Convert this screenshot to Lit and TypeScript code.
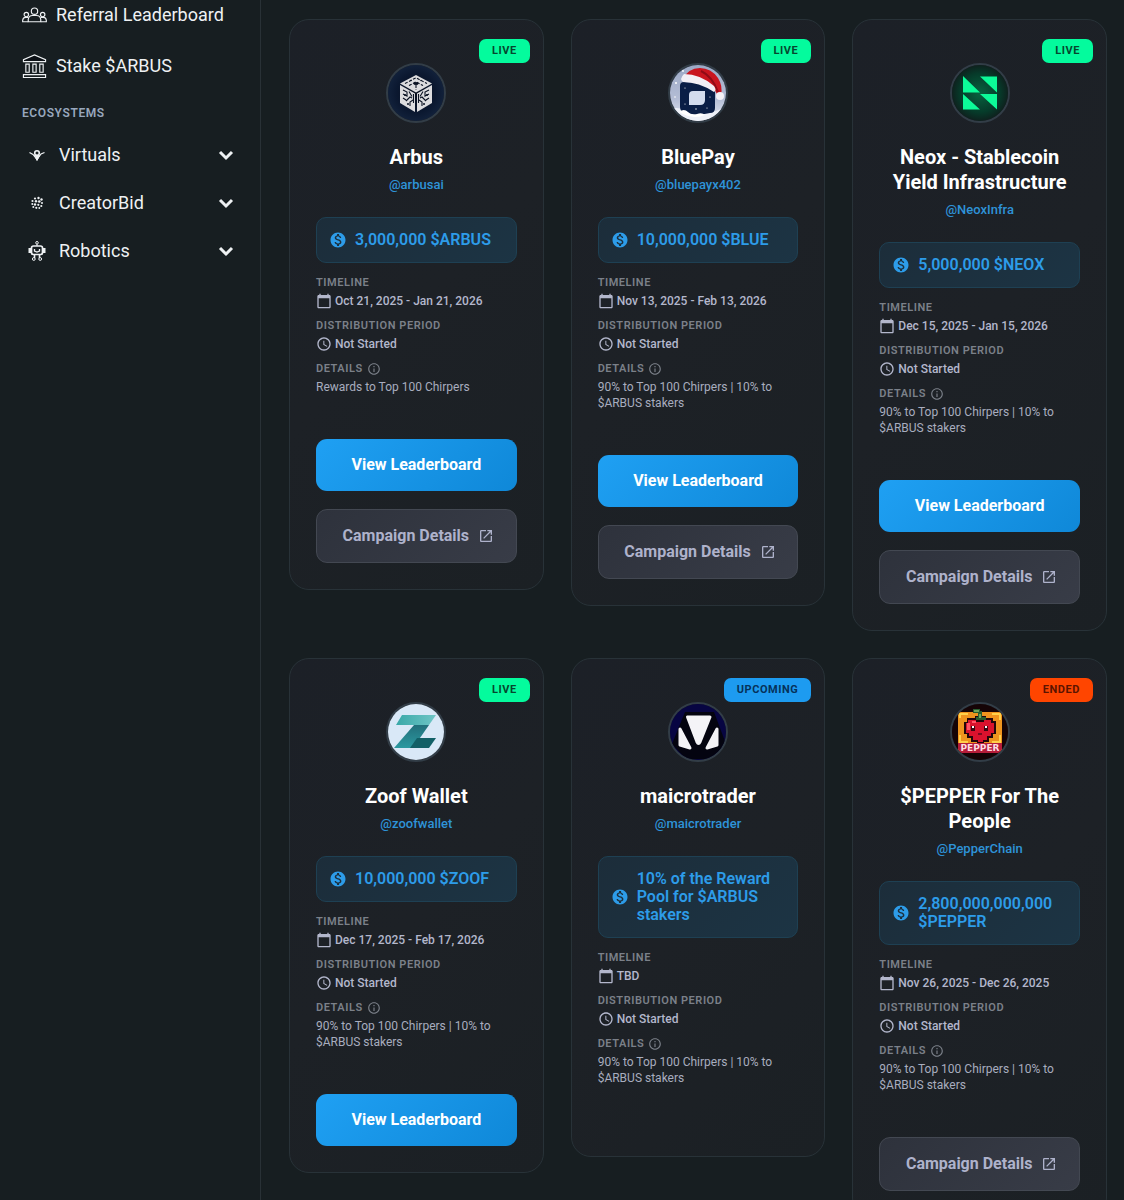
import { LitElement, html, css, svg, nothing } from "lit";
import { customElement, property } from "lit/decorators.js";

type Status = "live" | "upcoming" | "ended";

interface Campaign {
  name: string;
  handle: string;
  logo: string;
  status: Status;
  reward: string;
  timeline: string;
  details: string;
  leaderboard: boolean;
  campaign: boolean;
}

const SPLIT = "90% to Top 100 Chirpers | 10% to $ARBUS stakers";

const CAMPAIGNS: Campaign[] = [
  { name: "Arbus", handle: "arbusai", logo: "arbus", status: "live", reward: "3,000,000 $ARBUS", timeline: "Oct 21, 2025 - Jan 21, 2026", details: "Rewards to Top 100 Chirpers", leaderboard: true, campaign: true },
  { name: "BluePay", handle: "bluepayx402", logo: "bluepay", status: "live", reward: "10,000,000 $BLUE", timeline: "Nov 13, 2025 - Feb 13, 2026", details: SPLIT, leaderboard: true, campaign: true },
  { name: "Neox - Stablecoin Yield Infrastructure", handle: "NeoxInfra", logo: "neox", status: "live", reward: "5,000,000 $NEOX", timeline: "Dec 15, 2025 - Jan 15, 2026", details: SPLIT, leaderboard: true, campaign: true },
  { name: "Zoof Wallet", handle: "zoofwallet", logo: "zoof", status: "live", reward: "10,000,000 $ZOOF", timeline: "Dec 17, 2025 - Feb 17, 2026", details: SPLIT, leaderboard: true, campaign: false },
  { name: "maicrotrader", handle: "maicrotrader", logo: "maicro", status: "upcoming", reward: "10% of the Reward Pool for $ARBUS stakers", timeline: "TBD", details: SPLIT, leaderboard: false, campaign: false },
  { name: "$PEPPER For The People", handle: "PepperChain", logo: "pepper", status: "ended", reward: "2,800,000,000,000 $PEPPER", timeline: "Nov 26, 2025 - Dec 26, 2025", details: SPLIT, leaderboard: false, campaign: true },
];

const logos: Record<string, unknown> = {
  arbus: svg`
    <defs><radialGradient id="a"><stop offset="0" stop-color="#070d1b"/><stop offset=".65" stop-color="#0b1830"/><stop offset="1" stop-color="#13233d"/></radialGradient></defs>
    <rect width="60" height="60" fill="url(#a)"/>
    <g fill="#dcdcde">
      <path d="M30 12 46 20.500 30 29.500 14 20.500Z"/>
      <path d="M14 22 29 30.500V49L14 40Z"/>
      <path d="M46 22 31 30.500V49L46 40Z"/>
    </g>
    <g fill="none" stroke="#0a1222" stroke-width="1.100">
      <path d="M19 20.500 30 14.800 41 20.500M23 22.600l7-3.800 7 3.800M30 22v5" stroke-dasharray="3 1.500"/>
      <path d="M17 27l4 2v4l-4-2M20 38l4-4 2 1M23 28.500l3 5M17 35l3 2M24 43v-4l3-2"/>
      <path d="M43 27l-4 2v4l4-2M40 38l-4-4-2 1M37 28.500l-3 5M43 35l-3 2M36 43v-4l-3-2"/>
      <path d="M27.500 31v9M32.500 31v9"/>
    </g>
    <ellipse cx="30" cy="20.500" rx="2.600" ry="1.600" fill="#0a1222"/>
    <g fill="#0a1222"><circle cx="25" cy="17.500" r=".8"/><circle cx="35" cy="17.500" r=".8"/><circle cx="19" cy="32" r="1"/><circle cx="41" cy="32" r="1"/><circle cx="22" cy="41" r="1"/><circle cx="38" cy="41" r="1"/></g>`,
  bluepay: svg`
    <defs><linearGradient id="b" x2="0" y2="1"><stop offset="0" stop-color="#9aa8c5"/><stop offset=".6" stop-color="#b4bdd5"/><stop offset="1" stop-color="#e9edf6"/></linearGradient></defs>
    <rect width="60" height="60" fill="url(#b)"/>
    <path d="M0 47Q8 43 17 47T34 51T60 43V60H0Z" fill="#edf0f8"/>
    <path d="M16 19 38 20 47 27V45Q47 50 42 50L31 52 17 50Q12 49 12 44V23Q12 19 16 19Z" fill="#0a1e46"/>
    <path d="M25 28H37V37Q37 42 32 42H21V32Q21 28 25 28Z" fill="#d3dcee"/>
    <path d="M14 17Q20 5 32 5Q43 5 50 15Q55 23 53 32L49 31Q44 20 34 17Z" fill="#c9151f"/>
    <path d="M33 8Q44 13 50 29" fill="none" stroke="#900b16" stroke-width="2"/>
    <path d="M16 11Q32 11 46 23Q49 27 46 29Q31 19 15 19Q11 16 16 11Z" fill="#f2eff5"/>
    <circle cx="52" cy="33" r="4" fill="#f5f2f7"/>
    <g fill="#fff"><circle cx="8" cy="20" r="1"/><circle cx="15" cy="8" r=".9"/><circle cx="7" cy="34" r=".8"/><circle cx="17" cy="25" r=".6"/><circle cx="42" cy="34" r=".6"/><circle cx="28" cy="46" r=".7"/><circle cx="39" cy="45" r=".6"/><circle cx="17" cy="41" r=".6"/></g>
    <path d="M11 49q5-4 9 0t9 2 8 1q-12 5-26-3Z" fill="#fff"/>`,
  neox: svg`
    <defs><radialGradient id="n"><stop offset="0" stop-color="#08623f"/><stop offset=".65" stop-color="#063b2a"/><stop offset="1" stop-color="#101b1b"/></radialGradient></defs>
    <rect width="60" height="60" fill="url(#n)"/>
    <g fill="#0cfb98"><path d="M13 13 30 29.500H13ZM13 31 30 46.500H13ZM30 13.500H47V29.500ZM30 31H47V46.500Z"/></g>`,
  zoof: svg`
    <defs><linearGradient id="z"><stop offset="0" stop-color="#39a8a8"/><stop offset="1" stop-color="#6fc5c6"/></linearGradient><linearGradient id="z2" x2="0" y2="1"><stop offset="0" stop-color="#226f7b"/><stop offset="1" stop-color="#2b99a0"/></linearGradient></defs>
    <rect width="60" height="60" fill="#d9e8f7"/>
    <path d="M16 13H50L43 23H10Z" fill="url(#z)"/>
    <path d="M28 23H43L27 46H8Z" fill="url(#z2)"/>
    <path d="M31 36H50L43 46H24Z" fill="#126067"/>`,
  maicro: svg`
    <rect width="60" height="60" fill="#070542"/>
    <path d="M17 10H46L58 42 43 57H18L4 42Z" fill="#040410"/>
    <g fill="#f4f3f7" stroke="#f4f3f7" stroke-linejoin="round" stroke-width="3"><path d="M19.500 15H42L32 40Q30.500 43 29 40ZM12 27 22 46 12 43ZM49 27 39 46 49 43Z"/></g>`,
  pepper: svg`
    <rect width="60" height="60" fill="#150406"/>
    <rect x="8" y="10" width="44" height="40" fill="#ef941e"/><path d="M10 16V12H18M42 12H50V18M10 33V40H18M50 33V40H42" fill="none" stroke="#ffd04a" stroke-width="2"/>
    <path d="M17 16H25V14H36V16H43V19H46V32H43V36H39V40H34V42H27V40H21V36H17V32H14V20H17Z" fill="#23060b"/>
    <path d="M18 18H26V20H34V18H41V21H44V31H41V34H37V38H33V40H28V38H23V34H19V31H16V21H18Z" fill="#d9122d"/>
    <path d="M17 21H20V28H17ZM22 19H26V21H22Z" fill="#ff5366"/>
    <path d="M23 7H30V9H32V15H36V18H26V15H28V11H23Z" fill="#285d2e"/><path d="M24 8H29V10H24ZM29 12H31V16H29Z" fill="#72a35a"/>
    <path d="M21 24H25V29H21ZM34 24H38V29H34Z" fill="#3b0612"/><path d="M22 24H24V26H22ZM35 24H37V26H35Z" fill="#fff"/>
    <path d="M28 31H32V33H28Z" fill="#790a20"/>
    <rect x="8" y="41" width="44" height="10" fill="#b51d3a"/>
    <text x="30" y="49" text-anchor="middle" font-family="DejaVu Sans, sans-serif" font-size="9" font-weight="700" fill="#ffdbe2">PEPPER</text>`,
};

const coinIcon = svg`<svg class="coin" viewBox="0 0 24 24" aria-hidden="true"><path fill="currentColor" d="M12 2C6.480 2 2 6.480 2 12s4.480 10 10 10 10-4.480 10-10S17.520 2 12 2zm1.410 16.090V20h-2.670v-1.930c-1.710-.36-3.160-1.460-3.270-3.400h1.960c.1 1.050.82 1.870 2.650 1.870 1.960 0 2.400-.98 2.400-1.590 0-.83-.44-1.610-2.670-2.140-2.480-.6-4.180-1.620-4.180-3.670 0-1.720 1.390-2.840 3.110-3.210V4h2.670v1.950c1.860.45 2.790 1.860 2.850 3.390H14.300c-.05-1.110-.64-1.870-2.220-1.870-1.500 0-2.400.68-2.400 1.640 0 .84.65 1.390 2.670 1.910s4.180 1.390 4.180 3.910c-.01 1.830-1.380 2.830-3.120 3.160z"/></svg>`;
const calendarIcon = svg`<svg class="meta" viewBox="0 0 24 24" aria-hidden="true"><path fill="currentColor" d="M20 3h-1V1h-2v2H7V1H5v2H4c-1.100 0-2 .9-2 2v16c0 1.100.9 2 2 2h16c1.100 0 2-.9 2-2V5c0-1.100-.9-2-2-2zm0 18H4V8h16v13z"/></svg>`;
const clockIcon = svg`<svg class="meta" viewBox="0 0 24 24" aria-hidden="true"><path fill="currentColor" d="M11.990 2C6.470 2 2 6.480 2 12s4.470 10 9.990 10C17.520 22 22 17.520 22 12S17.520 2 11.990 2zM12 20c-4.420 0-8-3.580-8-8s3.580-8 8-8 8 3.580 8 8-3.580 8-8 8zm.5-13H11v6l5.250 3.150.75-1.230-4.500-2.670z"/></svg>`;
const infoIcon = svg`<svg class="info" viewBox="0 0 24 24" aria-hidden="true"><path fill="currentColor" d="M11 7h2v2h-2zm0 4h2v6h-2zm1-9C6.480 2 2 6.480 2 12s4.480 10 10 10 10-4.480 10-10S17.520 2 12 2zm0 18c-4.410 0-8-3.590-8-8s3.590-8 8-8 8 3.590 8 8-3.590 8-8 8z"/></svg>`;
const openIcon = svg`<svg class="open" viewBox="0 0 24 24" aria-hidden="true"><path fill="currentColor" d="M19 19H5V5h7V3H5c-1.110 0-2 .9-2 2v14c0 1.100.89 2 2 2h14c1.100 0 2-.9 2-2v-7h-2v7zM14 3v2h3.590l-9.830 9.830 1.410 1.410L19 6.410V10h2V3h-7z"/></svg>`;

const referralIcon = svg`<svg class="icon" viewBox="0 0 26 26" fill="none" stroke="currentColor" stroke-width="1.200" aria-hidden="true"><circle cx="13" cy="9" r="3.300"/><path d="M6.500 20V17.500Q7 13.500 11 13.500H15Q19 13.500 19.500 17.500V20Z"/><circle cx="4.500" cy="12.500" r="2.300"/><circle cx="21.500" cy="12.500" r="2.300"/><path d="M6.500 20H.7V18.500Q1 15.500 4 15.500H6.500M19.500 20H25.300V18.500Q25 15.500 22 15.500H19.500"/></svg>`;
const bankIcon = svg`<svg class="icon" viewBox="0 0 26 26" fill="none" stroke="currentColor" stroke-width="1.200" aria-hidden="true"><path d="M1.500 8.500V6.500L13 1.500 24.500 6.500V8.500Z" fill="#0b1015"/><path d="M4 11H7.500V19.500H4ZM11.300 11H14.700V19.500H11.300ZM18.500 11H22V19.500H18.500Z"/><path d="M1.500 22H24.500V25H1.500Z"/></svg>`;
const virtualsIcon = svg`<svg class="eco" viewBox="0 0 20 20" fill="none" stroke="currentColor" aria-hidden="true"><path d="M2.500 7.500 6 9.500 10 14.500 14 9 17.500 7.500" stroke-width="1.200"/><circle cx="10" cy="8" r="2.300" stroke-width="1.600"/><path d="M7.500 10 10 15.500 12.500 10.500Z" fill="currentColor"/></svg>`;
const creatorIcon = svg`<svg class="eco" viewBox="0 0 20 20" fill="currentColor" aria-hidden="true"><circle cx="8" cy="5.500" r="1.100"/><circle cx="11.500" cy="5" r="1.200"/><circle cx="14.500" cy="6.500" r="1.200"/><circle cx="5.500" cy="8" r="1.100"/><circle cx="9" cy="8.300" r="1.200"/><circle cx="12.300" cy="8.500" r="1.300"/><circle cx="15" cy="10" r="1"/><circle cx="5.300" cy="11" r="1"/><circle cx="8" cy="11.500" r="1.200"/><circle cx="11.300" cy="11.800" r="1.100"/><circle cx="14.300" cy="13" r="1.100"/><circle cx="6.300" cy="14" r="1"/><circle cx="9.300" cy="14.800" r="1.100"/><circle cx="12.300" cy="15" r=".9"/></svg>`;
const robotIcon = svg`<svg class="eco" viewBox="0 0 20 20" fill="none" stroke="currentColor" aria-hidden="true"><circle cx="10" cy="1.800" r="1.300"/><path d="M10 3V5"/><rect x="4.500" y="5" width="11" height="8.500" rx="2" stroke-width="1.700"/><path d="M3 7V12M17 7V12" stroke-width="3"/><path d="M7.500 8V10L10 11 12.500 10V8" stroke-width="1.300"/><path d="M7.500 13.500V17M12.500 13.500V17" stroke-width="1.600"/><circle cx="6.800" cy="18" r="1.400"/><circle cx="13.200" cy="18" r="1.400"/></svg>`;
const chevronIcon = svg`<svg class="chevron" viewBox="0 0 16 16" fill="none" stroke="currentColor" stroke-width="3" aria-hidden="true"><path d="M2 5 8 11 14 5"/></svg>`;

@customElement("side-nav")
export class SideNav extends LitElement {
  static styles = css`
    :host { display: block; }
    .nav { display: flex; flex-direction: column; padding: 2px 22px; }
    .link { display: flex; align-items: center; gap: 9px; height: 26px; margin-bottom: 25px; color: #eef1f3; font-size: 18px; line-height: 26px; text-decoration: none; white-space: nowrap; }
    .icon { width: 25px; height: 26px; flex: none; }
    .heading { margin: 4px 0 22px; font-size: 12px; line-height: 16px; font-weight: 600; letter-spacing: 0.05em; color: #98a7bd; }
    .group { display: flex; align-items: center; height: 24px; margin: 0 0 24px; padding: 0 4px 0 5px; border: 0; background: none; color: #eef1f3; font: 400 18px/24px Roboto, sans-serif; text-align: left; }
    .label { flex: 1; margin-left: 12px; }
    .eco { width: 20px; height: 20px; flex: none; }
    .chevron { width: 16px; height: 16px; }
    .link:last-of-type { margin-bottom: 22px; }
  `;

  render() {
    const groups: [string, unknown][] = [["Virtuals", virtualsIcon], ["CreatorBid", creatorIcon], ["Robotics", robotIcon]];
    return html`<nav class="nav">
      <a class="link" href="#referral">${referralIcon}Referral Leaderboard</a>
      <a class="link" href="#stake">${bankIcon}Stake $ARBUS</a>
      <h2 class="heading">ECOSYSTEMS</h2>
      ${groups.map(([label, icon]) => html`<button class="group" type="button" aria-expanded="false">${icon}<span class="label">${label}</span>${chevronIcon}</button>`)}
    </nav>`;
  }
}

@customElement("campaign-card")
export class CampaignCard extends LitElement {
  @property({ attribute: false }) item!: Campaign;

  static styles = css`
    :host { display: block; }
    .card { position: relative; display: flex; flex-direction: column; padding: 43px 26px 26px; border: 1px solid #283238; border-radius: 20px; background: linear-gradient(135deg, #1c2027, #1d2126 50%, #1b2024); }
    .badge { position: absolute; top: 19px; right: 13px; padding: 0 13px; border-radius: 7px; font-size: 11px; line-height: 24px; font-weight: 700; letter-spacing: 0.05em; }
    .live { background: #04fb9d; color: #06472f; }
    .upcoming { background: #1d9bf0; color: #06325a; }
    .ended { background: #ff4500; color: #5c1400; }
    .avatar { align-self: center; width: 60px; height: 60px; box-sizing: border-box; border: 2px solid #323d47; border-radius: 50%; overflow: hidden; }
    .avatar svg { display: block; width: 100%; height: 100%; }
    .name { margin: 22px 0 0; text-align: center; font-size: 20px; line-height: 25px; font-weight: 700; color: #fff; }
    .handle { align-self: center; margin: 5px 0 22px; font-size: 13px; line-height: 20px; font-weight: 500; color: #2e93d8; text-decoration: none; }
    .reward { display: flex; align-items: center; gap: 8px; padding: 13px 12px; border: 1px solid #1e4053; border-radius: 10px; background: linear-gradient(135deg, #1c2d3a, #1c3444); color: #2d9ce9; font-size: 16px; line-height: 18px; font-weight: 600; }
    .coin { width: 18px; height: 18px; flex: none; }
    .facts { margin: 12px 0 0; }
    .term { display: flex; align-items: center; gap: 4px; font-size: 11px; line-height: 16px; font-weight: 600; letter-spacing: 0.05em; color: #7b8089; }
    .value { display: flex; align-items: center; gap: 3px; margin: 2px 0 9px; font-size: 12px; line-height: 16px; font-weight: 500; color: #b3b7cc; }
    .text { margin: 2px 0 0; font-size: 12px; line-height: 16px; color: #a8adbf; }
    .meta { width: 16px; height: 16px; flex: none; }
    .info { width: 14px; height: 14px; flex: none; }
    .actions { display: flex; flex-direction: column; gap: 18px; margin-top: 44px; }
    .primary, .secondary { display: flex; align-items: center; justify-content: center; border-radius: 11px; font: 700 16px/20px Roboto, sans-serif; text-decoration: none; }
    .primary { padding: 16px; border: 0; background: linear-gradient(135deg, #1fa0f3, #0f88d8); color: #fff; }
    .secondary { gap: 9px; padding: 16px 12px 16px 16px; border: 1px solid #434852; background: linear-gradient(135deg, #2e323c, #383c47); color: #aeb2cb; }
    .open { width: 16px; height: 16px; }
  `;

  render() {
    const c = this.item;
    return html`<article class="card">
      <span class="badge ${c.status}">${c.status.toUpperCase()}</span>
      <div class="avatar"><svg viewBox="2 2 56 56" role="img" aria-label=${c.name}>${logos[c.logo]}</svg></div>
      <h3 class="name">${c.name}</h3>
      <a class="handle" href="#${c.handle}">@${c.handle}</a>
      <div class="reward">${coinIcon}<span>${c.reward}</span></div>
      <dl class="facts">
        <dt class="term">TIMELINE</dt>
        <dd class="value">${calendarIcon}${c.timeline}</dd>
        <dt class="term">DISTRIBUTION PERIOD</dt>
        <dd class="value">${clockIcon}Not Started</dd>
        <dt class="term">DETAILS ${infoIcon}</dt>
        <dd class="text">${c.details}</dd>
      </dl>
      <div class="actions">
        ${c.leaderboard ? html`<button class="primary" type="button">View Leaderboard</button>` : nothing}
        ${c.campaign ? html`<a class="secondary" href="#details">Campaign Details ${openIcon}</a>` : nothing}
      </div>
    </article>`;
  }
}

@customElement("app-root")
export class AppRoot extends LitElement {
  static styles = css`
    :host { display: block; font-family: Roboto, sans-serif; }
    .shell { display: grid; grid-template-columns: 261px minmax(0, 1fr); height: 100vh; background: #171e21; }
    .side { border-right: 1px solid #293136; }
    .main { overflow-y: auto; scrollbar-width: none; padding: 19px 17px 27px 28px; }
    .grid { display: grid; grid-template-columns: repeat(auto-fill, minmax(240px, 1fr)); gap: 27px; align-items: start; }
  `;

  render() {
    return html`<div class="shell">
      <side-nav class="side"></side-nav>
      <main class="main"><div class="grid">
        ${CAMPAIGNS.map((c) => html`<campaign-card .item=${c}></campaign-card>`)}
      </div></main>
    </div>`;
  }
}
